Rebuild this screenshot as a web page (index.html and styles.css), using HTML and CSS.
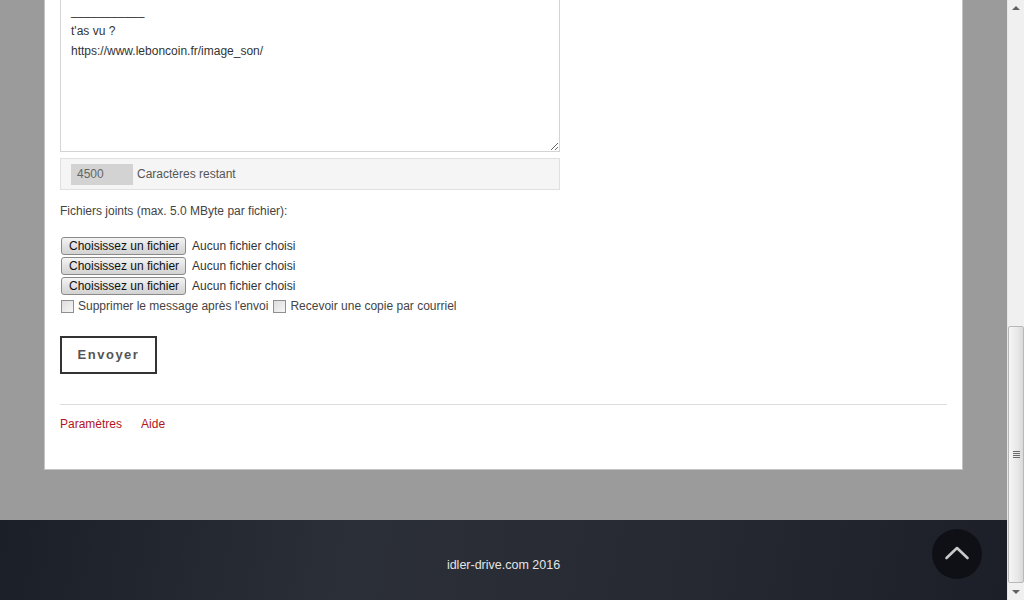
FILE: index.html
```html
<!DOCTYPE html>
<html lang="fr">
<head>
<meta charset="utf-8">
<title>Message</title>
<link rel="stylesheet" href="styles.css">
</head>
<body>
<div class="window">
  <div class="page">
    <div class="panel">
      <textarea class="message" readonly>___________
t'as vu ?
https://www.leboncoin.fr/image_son/</textarea>
      <div class="counter">
        <span class="count">4500</span>
        <span class="count-label">Caractères restant</span>
      </div>
      <div class="attach-label">Fichiers joints (max. 5.0 MByte par fichier):</div>
      <div class="file-row"><span class="file-btn">Choisissez un fichier</span><span class="file-name">Aucun fichier choisi</span></div>
      <div class="file-row"><span class="file-btn">Choisissez un fichier</span><span class="file-name">Aucun fichier choisi</span></div>
      <div class="file-row"><span class="file-btn">Choisissez un fichier</span><span class="file-name">Aucun fichier choisi</span></div>
      <div class="check-row">
        <span class="check"></span><span class="check-label">Supprimer le message après l'envoi</span>
        <span class="check"></span><span class="check-label">Recevoir une copie par courriel</span>
      </div>
      <div class="send-row"><span class="send">Envoyer</span></div>
      <div class="rule"></div>
      <div class="links"><a class="link" href="#">Paramètres</a><a class="link" href="#">Aide</a></div>
    </div>
    <div class="footer">
      <span class="copyright">idler-drive.com 2016</span>
      <span class="to-top">
        <svg width="26" height="16" viewBox="0 0 26 16"><path d="M2.5 13 L13 3 L23.5 13" fill="none" stroke="#c9c9c9" stroke-width="2.6" stroke-linecap="round" stroke-linejoin="round"/></svg>
      </span>
    </div>
  </div>
  <div class="scrollbar">
    <div class="arrow arrow-up"></div>
    <div class="track">
      <div class="thumb"><span class="grip"></span></div>
    </div>
    <div class="arrow arrow-down"></div>
  </div>
</div>
</body>
</html>
```

FILE: styles.css
```css
* { box-sizing: border-box; }
html, body { margin: 0; padding: 0; height: 100%; overflow: hidden; }
body {
  font-family: "Liberation Sans", Arial, sans-serif;
  font-size: 12px;
  color: #333;
}
.window { display: flex; width: 1024px; height: 600px; }
.page {
  width: 1007px;
  height: 600px;
  background: #9b9b9b;
  display: flex;
  flex-direction: column;
  justify-content: flex-end;
  overflow: hidden;
}
.panel {
  flex: none;
  margin: 0 44px 50px;
  background: #fff;
  border: 1px solid #c4c4c4;
  border-top: none;
  padding: 0 15px 37px;
  display: flex;
  flex-direction: column;
  align-items: flex-start;
}
.message {
  display: block;
  width: 500px;
  height: 162px;
  border: 1px solid #d4d4d4;
  padding: 10px 10px;
  font-family: "Liberation Sans", Arial, sans-serif;
  font-size: 12px;
  line-height: 20px;
  color: #333;
  background: #fff;
  resize: vertical;
  outline: none;
  overflow: hidden;
}
.counter {
  margin-top: 6px;
  width: 500px;
  height: 32px;
  background: #f5f5f5;
  border: 1px solid #e0e0e0;
  display: flex;
  align-items: center;
  padding-left: 10px;
}
.count {
  width: 62px;
  height: 21px;
  background: #d3d3d3;
  color: #666;
  padding-left: 6px;
  line-height: 21px;
}
.count-label { margin-left: 4px; color: #555; }
.attach-label { margin-top: 13px; line-height: 16px; color: #444; }
.file-row {
  display: flex;
  align-items: center;
  height: 20px;
}
.attach-label + .file-row { margin-top: 17px; }
.file-btn {
  height: 18px;
  padding: 0 6px 0 7px;
  margin-left: 1px;
  border: 1px solid #8a8a8a;
  border-radius: 3px;
  background: linear-gradient(#f4f4f4, #e2e2e2 50%, #d2d2d2);
  color: #111;
  line-height: 16px;
}
.file-name { margin-left: 6px; color: #333; }
.check-row { display: flex; align-items: center; height: 20px; }
.check {
  width: 13px;
  height: 13px;
  margin-left: 1px;
  border: 1px solid #8e8f8f;
  background: linear-gradient(135deg, #dcdcdc, #f6f6f6);
}
.check-label { margin-left: 4px; margin-right: 4px; color: #444; }
.send-row { margin-top: 20px; }
.send {
  display: inline-block;
  width: 97px;
  height: 38px;
  border: 2px solid #333;
  text-align: center;
  line-height: 34px;
  font-weight: bold;
  font-size: 13px;
  letter-spacing: 1.5px;
  color: #555;
}
.rule { align-self: stretch; margin-top: 30px; height: 1px; background: #dcdcdc; }
.links { margin-top: 11px; line-height: 16px; display: flex; gap: 19px; }
.link { color: #b3141d; text-decoration: none; }
.footer {
  flex: none;
  position: relative;
  height: 80px;
  background: linear-gradient(100deg, #1b1f27 0%, #2b2f38 35%, #272a33 65%, #1c1f27 100%);
  display: flex;
  justify-content: center;
  align-items: center;
}
.copyright { color: #e4e4e4; font-size: 12.5px; margin-top: 9px; }
.to-top {
  position: absolute;
  right: 25px;
  top: 9px;
  width: 50px;
  height: 50px;
  border-radius: 50%;
  background: #0e1015;
  display: flex;
  align-items: center;
  justify-content: center;
  padding-bottom: 2px;
}
.scrollbar {
  width: 17px;
  height: 600px;
  background: #f0f0f0;
  border-left: 1px solid #e6e6e6;
  display: flex;
  flex-direction: column;
}
.arrow { height: 17px; position: relative; }
.arrow::after {
  content: "";
  position: absolute;
  left: 4px;
  border-left: 4px solid transparent;
  border-right: 4px solid transparent;
}
.arrow-up::after { top: 6px; border-bottom: 4px solid #606060; }
.arrow-down::after { top: 7px; border-top: 4px solid #606060; }
.track { flex: 1; display: flex; flex-direction: column; justify-content: flex-end; }
.thumb {
  height: 257px;
  border: 1px solid #b8b8b8;
  border-radius: 2px;
  background: linear-gradient(to right, #f6f6f6, #e8e8e8 60%, #d9d9d9);
  display: flex;
  align-items: center;
  justify-content: center;
}
.grip {
  width: 7px;
  height: 7px;
  background: repeating-linear-gradient(#6a6a6a 0 1px, transparent 1px 2px);
}
```
